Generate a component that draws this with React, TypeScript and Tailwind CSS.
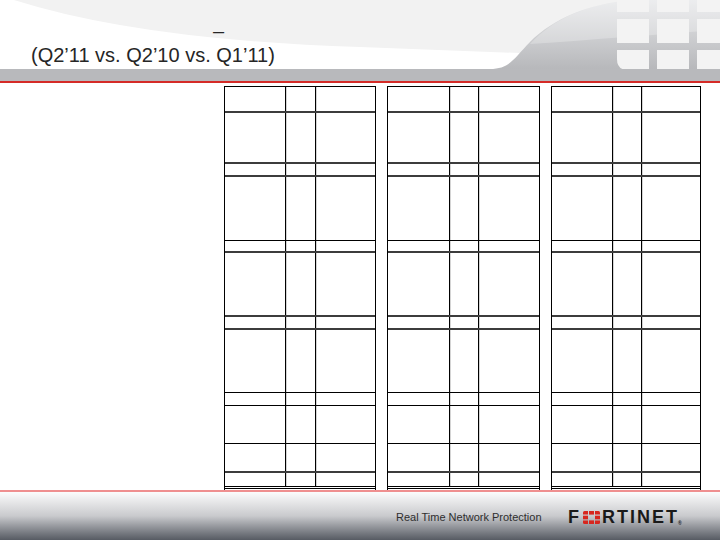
import React from 'react'

const rows: Array<{ h: string; thick: boolean }> = [
  { h: 'h-[26px]', thick: true },
  { h: 'h-[51px]', thick: true },
  { h: 'h-[13px]', thick: true },
  { h: 'h-[64px]', thick: false },
  { h: 'h-[12px]', thick: true },
  { h: 'h-[64px]', thick: true },
  { h: 'h-[13px]', thick: true },
  { h: 'h-[63px]', thick: false },
  { h: 'h-[13px]', thick: false },
  { h: 'h-[38px]', thick: false },
  { h: 'h-[29px]', thick: true },
  { h: 'h-[16px]', thick: false },
]

function GridTable({ width, cols }: { width: string; cols: string[] }) {
  return (
    <div className={`${width} flex flex-col border-t border-x border-black`}>
      {rows.map((r, i) => {
        const last = i === rows.length - 1
        const line = last
          ? 'border-b-[3px] border-double border-black'
          : r.thick
          ? 'border-b-2 border-[#3c3c3c]'
          : 'border-b border-black'
        return (
          <div key={i} className={`flex ${r.h} ${line}`}>
            <div className={`${cols[0]} border-r border-black shadow-[1px_0_0_#d4d4d4]`} />
            <div className={`${cols[1]} border-r border-black shadow-[1px_0_0_#d4d4d4]`} />
            <div className="flex-1" />
          </div>
        )
      })}
    </div>
  )
}

function HeaderArt() {
  return (
    <svg className="absolute inset-0" width="720" height="69" viewBox="0 0 720 69">
      <defs>
        <linearGradient id="swoosh" x1="0" y1="0" x2="0" y2="1">
          <stop offset="0" stopColor="#e6e7e9" />
          <stop offset="1" stopColor="#b7b8bb" />
        </linearGradient>
      </defs>
      <rect width="720" height="69" fill="#f2f2f2" />
      <path d="M0 0 L14 0 Q140 40 360 47 L520 53 L520 69 L0 69 Z" fill="#ffffff" />
      <path
        d="M490 69 C510 69 514 58 530 42 C554 18 588 4 632 0 L720 0 L720 69 Z"
        fill="url(#swoosh)"
      />
      <path
        d="M530 44 C554 18 588 4 632 0 L720 0 L720 30 C660 34 592 40 530 44 Z"
        fill="#ffffff"
        opacity="0.25"
      />
      <g fill="#f3f3f3">
        <rect x="617" y="0" width="32" height="12" />
        <rect x="657" y="0" width="32" height="12" />
        <rect x="697" y="0" width="23" height="12" />
        <rect x="617" y="19" width="32" height="24" />
        <rect x="657" y="19" width="32" height="24" />
        <rect x="697" y="19" width="23" height="24" />
        <path d="M617 50 L649 50 L649 70 L628 70 Q617 70 617 59 Z" />
        <rect x="657" y="50" width="32" height="20" />
        <rect x="697" y="50" width="23" height="20" />
      </g>
    </svg>
  )
}

function FortinetLogo() {
  return (
    <div className="flex items-center font-['Liberation_Sans',Arial,sans-serif] font-bold text-[18px] leading-none text-[#1a1a1a]">
      <span className="w-[15px]">F</span>
      <svg width="17" height="13" viewBox="0 0 17 13" className="mr-[2px]">
        <g fill="#d7261e">
          <path d="M1.5 0 H5 V3.6 H0 V1.5 Q0 0 1.5 0 Z" />
          <rect x="6" y="0" width="5" height="3.6" />
          <path d="M12 0 H15.5 Q17 0 17 1.5 V3.6 H12 Z" />
          <rect x="0" y="4.7" width="5" height="3.6" />
          <rect x="12" y="4.7" width="5" height="3.6" />
          <path d="M0 9.4 H5 V13 H1.5 Q0 13 0 11.5 Z" />
          <rect x="6" y="9.4" width="5" height="3.6" />
          <path d="M12 9.4 H17 V11.5 Q17 13 15.5 13 H12 Z" />
        </g>
      </svg>
      <span className="tracking-[2px]">RTINET</span>
      <span className="text-[5px] self-end -ml-[1px]">®</span>
    </div>
  )
}

export default function App() {
  return (
    <div className="w-[720px] h-[540px] flex flex-col bg-white overflow-hidden font-['Liberation_Sans',Arial,sans-serif]">
      {/* Header */}
      <div className="relative h-[69px] shrink-0">
        <HeaderArt />
        <div className="relative pt-[19px] pl-[31px] text-[20px] leading-[24px] text-[#262626]">
          <div className="pl-[182px]">–</div>
          <div>(Q2’11 vs. Q2’10 vs. Q1’11)</div>
        </div>
      </div>
      <div className="h-[12px] shrink-0 bg-[#b8b9bc]" />
      <div className="h-[2px] shrink-0 bg-[#d52b27]" />

      {/* Tables */}
      <div className="flex-1 flex gap-[11px] pl-[224px] pt-[3px]">
        <GridTable width="w-[152px]" cols={['w-[61px]', 'w-[30px]']} />
        <GridTable width="w-[153px]" cols={['w-[62px]', 'w-[29px]']} />
        <GridTable width="w-[150px]" cols={['w-[61px]', 'w-[29px]']} />
      </div>

      {/* Footer */}
      <div className="h-[2px] shrink-0 bg-[#ef8f8f]" />
      <div className="h-[48px] shrink-0 bg-linear-to-b from-[#fcfcfc] via-[#c9cacd] to-[#575b63] flex items-start">
        <div className="ml-[396px] w-[172px] pt-[19px] text-[11px] leading-[13px] text-[#2e2e2e]">
          Real Time Network Protection
        </div>
        <div className="pt-[16px]">
          <FortinetLogo />
        </div>
      </div>
    </div>
  )
}
